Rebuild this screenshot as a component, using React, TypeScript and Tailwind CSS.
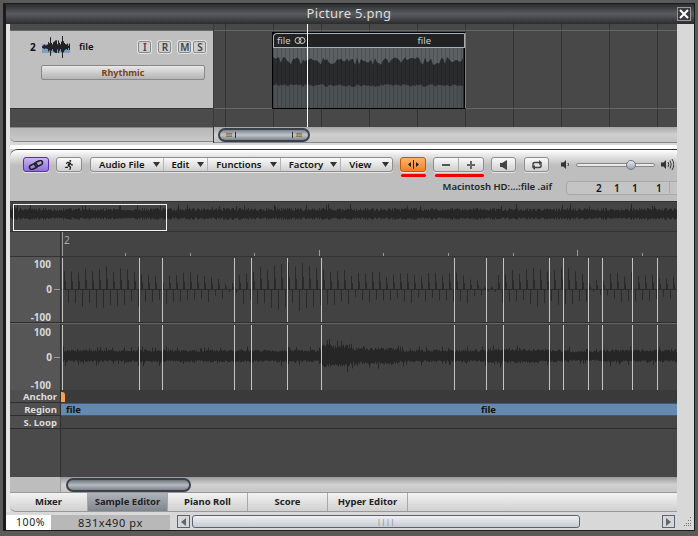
import React from "react";
import { FaRunning } from "react-icons/fa";

function rng(seed: number) {
  let s = seed;
  return () => {
    s = (s * 16807) % 2147483647;
    return (s - 1) / 2147483646;
  };
}

const W = 616; // wave width, x starts at 61
const transients = [62, 139, 162, 234, 251, 287, 321, 454, 486, 503, 549, 563, 588, 602, 632, 657];

function env(x: number, table: [number, number][]) {
  let v = table[0][1];
  for (const [k, a] of table) if (x >= k) v = a;
  return v;
}

const upEnv: [number, number][] = [[0, 21], [70, 19], [140, 15], [205, 11], [222, 5], [236, 16], [255, 22], [320, 17], [345, 14], [440, 15], [470, 10], [482, 3], [492, 16], [520, 19], [570, 15], [585, 5], [592, 8], [606, 14], [640, 12]];
const bandEnv: [number, number][] = [[0, 6], [140, 6], [240, 6], [321, 11], [350, 8], [400, 6], [454, 6], [488, 7], [540, 6], [570, 5], [600, 6], [620, 6]];

function Channel1() {
  const r = rng(77);
  const d: string[] = [];
  const z = 32;
  for (let x = 64; x < 677; x += 7) {
    const a = env(x, upEnv);
    const up = a * (0.85 + r() * 0.35);
    const dn = a * (0.6 + r() * 0.4);
    d.push(`M${x - 61}.5 ${z}V${z - up}`);
    d.push(`M${x - 61 + 1}.5 ${z}V${z - up * 0.45}`);
    d.push(`M${x - 61 + 4}.5 ${z}V${z + dn}`);
  }
  return (
    <svg width={W} height={66} className="block">
      <path d={d.join("")} stroke="#2a2a2a" strokeWidth={1} fill="none" />
      <path d={`M0 ${z}.5H${W}`} stroke="#2a2a2a" />
      <Trans h={66} />
    </svg>
  );
}

function Channel2() {
  const r = rng(991);
  const d: string[] = [];
  const z = 32;
  for (let x = 62; x < 677; x++) {
    const a = env(x, bandEnv);
    const up = a * (0.7 + r() * (r() > 0.8 ? 0.9 : 0.35));
    const dn = a * (0.7 + r() * (r() > 0.8 ? 1.0 : 0.35));
    d.push(`M${x - 61}.5 ${z - up}V${z + dn}`);
  }
  return (
    <svg width={W} height={67} className="block">
      <path d={d.join("")} stroke="#262626" strokeWidth={1} fill="none" />
      <Trans h={67} />
    </svg>
  );
}

function Trans({ h }: { h: number }) {
  return (
    <path
      d={transients.map((x) => `M${x - 61}.5 1V${h}`).join("")}
      stroke="#c4c4c4"
      strokeWidth={1}
      fill="none"
    />
  );
}

function Overview() {
  const r = rng(4242);
  const d: string[] = [];
  for (let x = 0; x < 667; x++) {
    const base = 3 + r() * 3;
    const spike = r() > 0.96 ? 4 : 0;
    d.push(`M${x}.5 ${12 - base - spike}V${13 + base * 0.8}`);
  }
  return (
    <svg width={667} height={30} className="block">
      <path d={d.join("")} stroke="#262626" fill="none" />
      <rect x={3.5} y={2.5} width={153} height={26} fill="none" stroke="#f2f2f2" />
    </svg>
  );
}

function RegionWave() {
  const r = rng(321);
  const top: string[] = ["M0 0"];
  const bot: string[] = ["M0 61"];
  const stripes: string[] = [];
  for (let x = 0; x <= 190; x += 2) {
    const t = 9 + r() * 8;
    top.push(`L${x} ${r() > 0.97 ? 30 : t}`);
    bot.push(`L${x} ${36 + r() * 3}`);
    if (x % 4 === 0) stripes.push(`M${x}.5 0V61`);
  }
  top.push("L190 0Z");
  bot.push("L190 61Z");
  return (
    <svg width={191} height={61} className="block">
      <rect width={191} height={61} fill="#2a2b2d" />
      <path d={top.join("")} fill="#5d6062" />
      <path d={bot.join("")} fill="#4b5053" />
      <path d={stripes.join("")} stroke="#000" strokeOpacity={0.14} fill="none" />
    </svg>
  );
}

function MiniWave() {
  const r = rng(55);
  const d: string[] = [];
  for (let x = 0; x < 28; x++) {
    const c = Math.abs(x - 14);
    const a = (r() * 5 + 2) * (c < 10 ? 1 : 0.5) + (x === 8 || x === 20 ? 6 : 0);
    d.push(`M${x}.5 ${11 - a}V${11 + a * 0.9}`);
  }
  return (
    <svg width={28} height={22} className="block">
      <rect y={8} width={28} height={9} fill="#7fa0c4" />
      <path d={d.join("")} stroke="#222" fill="none" />
    </svg>
  );
}

const btnShape =
  "flex items-center justify-center h-[15px] rounded-[3px] border shadow-[0_1px_0_#e4e4e4] bg-linear-to-b";
const btn = `${btnShape} border-[#8e8e8e] from-[#fafafa] to-[#cfcfcf]`;

function Menu({ label, w, last }: { label: string; w: string; last?: boolean }) {
  return (
    <div className={`${w} flex items-center justify-between pl-[8px] pr-[3px] h-full ${last ? "" : "border-r border-[#b5b5b5]"}`}>
      <span>{label}</span>
      <svg width={7} height={5}><path d="M0 0H7L3.5 5Z" fill="#333" /></svg>
    </div>
  );
}

function Ibtn({ c }: { c: string }) {
  return (
    <div className="w-[13px] h-[12px] flex items-center justify-center border border-[#8a8a8a] rounded-[2px] bg-[#cfcfcf] text-[10px] text-[#444] leading-none shadow-[0_0_0_1px_#e0e0e0]">
      {c}
    </div>
  );
}

function Labels({ pt }: { pt: string }) {
  return (
    <div className={`w-[51px] h-full ${pt} bg-[#565656] border-r border-[#333] flex flex-col justify-between text-[10px] font-bold text-[#d8d8d8] leading-none`}>
      <div className="text-right pr-[9px]">100</div>
      <div className="flex items-center justify-end gap-[2px] -mt-[3px]">
        <span>0</span>
        <span className="w-[6px] h-px bg-[#999]" />
      </div>
      <div className="text-right pr-[9px]">-100</div>
    </div>
  );
}

function RowLabel({ t, h }: { t: string; h: string }) {
  return (
    <div className={`w-[51px] ${h} pt-[1px] bg-[#4f4f4f] border-r border-b border-[#2e2e2e] text-[9.5px] font-bold text-[#dcdcdc] leading-none flex items-center justify-end pr-[3px] whitespace-nowrap`}>
      {t}
    </div>
  );
}

function Tab({ t, w, active }: { t: string; w: string; active?: boolean }) {
  return (
    <div
      className={`${w} h-full pb-[1px] flex items-center justify-center border-r border-[#a8a8a8] ${
        active ? "bg-linear-to-b from-[#b0b4ba] to-[#7f858d]" : ""
      }`}
    >
      {t}
    </div>
  );
}

export default function App() {
  return (
    <div className="w-[698px] h-[536px] bg-[#5a5a5a] overflow-hidden pl-[3px] pt-[3px] text-[#111] font-['Noto_Sans',sans-serif]">
      <div className="w-[692px] h-[528px] border border-l-[3px] border-[#1c1c1c] flex flex-col bg-[#d8d8d8]">
        {/* title */}
        <div className="h-[20px] shrink-0 relative flex items-center justify-center pr-[2px] pb-[1px] bg-linear-to-b from-[#2b2e31] via-[#5a5c5f] to-[#2a2c2e] text-[13px] tracking-[0.3px] text-[#dedede] leading-none">
          Picture 5.png
          <div className="absolute right-[3px] top-[3px] w-[14px] h-[14px] border border-[#999] bg-[#3c3c3c] flex items-center justify-center">
            <svg width={10} height={10}><path d="M1 1L9 9M9 1L1 9" stroke="#fff" strokeWidth={2} /></svg>
          </div>
        </div>

        <div className="flex flex-1 min-h-0">
          <div className="w-[4px] shrink-0 bg-[#e4e4e4]" />
          <div className="w-[667px] shrink-0 flex flex-col">
            {/* top pane */}
            <div className="h-[119px] shrink-0 flex relative">
              <div className="w-[203px] flex flex-col">
                <div className="h-[7px] bg-[#4b4b4b] border-b border-[#666]" />
                <div className="h-[78px] bg-[#bfbfbf] border-b border-[#333] relative pl-[20px] pt-[5px]">
                  <div className="flex items-center text-[9.5px] font-semibold h-[22px]">
                    <span className="w-[12px] text-[10px] font-bold">2</span>
                    <MiniWave />
                    <span className="ml-[9px]">file</span>
                    <div className="ml-[45px] flex gap-[7px]">
                      <Ibtn c="I" />
                      <Ibtn c="R" />
                      <div className="flex gap-[2px]">
                        <Ibtn c="M" />
                        <Ibtn c="S" />
                      </div>
                    </div>
                  </div>
                  <div className="mt-[7px] ml-[11px] w-[164px] h-[15px] pb-[1px] rounded-[2px] border border-[#888] bg-linear-to-b from-[#e8e8e8] to-[#b4b4b4] flex items-center justify-center text-[9px] font-bold text-[#7a4418] leading-none">
                    Rhythmic
                  </div>
                </div>
                <div className="h-[18px] bg-[#4b4b4b]" />
                <div className="h-[15px] bg-linear-to-b from-[#b8b8b8] to-[#c8c8c8] border-t border-[#888] border-b rounded-bl-[5px]" />
              </div>
              <div className="flex-1 flex flex-col border-l border-[#3a3a3a]">
                <div className="h-[103px] bg-[#484848] bg-[linear-gradient(to_right,#333_1px,transparent_1px)] bg-[length:48px_100%] bg-[position:11px_0]">
                  <div className="h-[7px] border-b border-[#666]" />
                  <div className="h-[78px] border-b border-[#666] pl-[58px] pt-[1px]">
                    <div className="w-[194px] h-[77px] border border-black border-r-[#3f8fdc] bg-black flex flex-col">
                      <div className="h-[15px] bg-[#222] border border-[#9fb3c4] rounded-tl-[4px] border-r-[#aaa] flex items-center justify-between text-[9.5px] text-[#ccc] leading-none pl-[3px] pr-[33px]">
                        <span className="flex items-center gap-[3px]">file
                          <svg width={12} height={7}><circle cx={4} cy={3.5} r={3} fill="none" stroke="#ccc" /><circle cx={8} cy={3.5} r={3} fill="none" stroke="#ccc" /></svg>
                        </span>
                        <span>file</span>
                      </div>
                      <RegionWave />
                    </div>
                  </div>
                </div>
                <div className="h-[16px] bg-linear-to-b from-[#a8a8a8] via-[#cfcfcf] to-[#c4c4c4] border-b border-[#888] pl-[4px] pt-[1px]">
                  <div className="w-[92px] h-[14px] rounded-full border-2 border-[#3a414a] bg-linear-to-b from-[#7d848c] via-[#c2c6cb] to-[#7d848c] flex items-center justify-between px-[6px] text-[6px] text-[#333] leading-none">
                    <span className="border-r border-[#333] pr-[3px]">III</span>
                    <span className="border-l border-[#333] pl-[3px]">III</span>
                  </div>
                </div>
              </div>
              <div className="absolute left-[297px] top-0 w-px h-[103px] bg-white" />
            </div>

            {/* separator */}
            <div className="h-[6px] shrink-0 bg-white border-t-2 border-[#d8d8d8]" />

            {/* editor */}
            <div className="flex-1 flex flex-col min-h-0 rounded-tl-[8px] overflow-hidden border-t border-[#333]">
              <div className="h-[51px] shrink-0 bg-linear-to-b from-white to-[#bebebe] to-30% relative text-[9.5px] font-semibold leading-none">
                <div className="flex items-center h-[15px] mt-[7px] ml-[13px]">
                  <div className={`${btnShape} w-[26px] border-[#5a2fb0] from-[#c9b6f2] to-[#8f6fdc]`}>
                    <svg width={16} height={10} viewBox="0 0 16 10">
                      <g transform="rotate(-25 8 5)" fill="none" stroke="#222" strokeWidth={1.6}>
                        <rect x={1} y={3} width={8} height={4.5} rx={2.2} />
                        <rect x={7} y={2.5} width={8} height={4.5} rx={2.2} />
                      </g>
                    </svg>
                  </div>
                  <div className={`${btn} w-[26px] ml-[7px]`}>
                    <FaRunning size={10} color="#222" />
                  </div>
                  <div className={`${btn} ml-[8px] w-[303px]`}>
                    <Menu label="Audio File" w="w-[73px]" />
                    <Menu label="Edit" w="w-[45px]" />
                    <Menu label="Functions" w="w-[73px]" />
                    <Menu label="Factory" w="w-[61px]" />
                    <Menu label="View" w="w-[51px]" last />
                  </div>
                  <div className={`${btnShape} w-[26px] ml-[7px] border-[#b85c10] from-[#ffb266] to-[#f08020]`}>
                    <svg width={13} height={9}><path d="M6.5 0V9" stroke="#222" /><path d="M4 2L1 4.5L4 7ZM9 2L12 4.5L9 7Z" fill="#222" /></svg>
                  </div>
                  <div className={`${btn} w-[51px] ml-[7px]`}>
                    <div className="flex-1 h-full flex items-center justify-center border-r border-[#aaa]">
                      <div className="w-[8px] h-[2px] bg-[#555]" />
                    </div>
                    <div className="flex-1 h-full flex items-center justify-center">
                      <svg width={8} height={8}><path d="M4 0V8M0 4H8" stroke="#666" strokeWidth={2} /></svg>
                    </div>
                  </div>
                  <div className={`${btn} w-[25px] ml-[7px]`}>
                    <svg width={8} height={10}><path d="M7 0V10L2 7H0V3H2Z" fill="#444" /></svg>
                  </div>
                  <div className={`${btn} w-[25px] ml-[8px]`}>
                    <svg width={14} height={10} fill="none" stroke="#444" strokeWidth={1.5}>
                      <path d="M3 7V4Q3 2.5 5 2.5H10" /><path d="M11 3V6Q11 7.5 9 7.5H4" />
                      <path d="M9 0L12 2.5L9 5Z" fill="#444" stroke="none" /><path d="M5 5L2 7.5L5 10Z" fill="#444" stroke="none" />
                    </svg>
                  </div>
                  <svg width={9} height={11} className="ml-[12px]"><path d="M5 1V10L2.5 7.5H0V3.5H2.5Z" fill="#333" /><path d="M7 4Q8 5.5 7 7" stroke="#333" fill="none" /></svg>
                  <div className="relative ml-[6px] w-[79px] h-[4px] rounded-full border border-[#888] bg-[#e8e8e8]">
                    <div className="absolute left-[49px] -top-[4px] w-[10px] h-[10px] rounded-full border border-[#777] bg-linear-to-b from-[#e6e9ef] to-[#98a4b8]" />
                  </div>
                  <svg width={13} height={13} className="ml-[6px]"><path d="M5 2V11L2.5 8.5H0V4.5H2.5Z" fill="#333" /><path d="M7 4Q8.5 6.5 7 9M9 2.5Q11.5 6.5 9 10.5M11 1Q14.5 6.5 11 12" stroke="#333" fill="none" /></svg>
                </div>
                <div className="absolute top-[24px] left-[391px] w-[25px] h-[3px] rounded-full bg-[#f00000]" />
                <div className="absolute top-[24px] left-[425px] w-[49px] h-[3px] rounded-full bg-[#f00000]" />
                <div className="flex items-center justify-end h-[14px] mt-[9px]">
                  <span className="mr-[14px] pb-[2px] text-[#222]">Macintosh HD:...:file .aif</span>
                  <div className="w-[111px] h-[14px] pb-[1px] rounded-l-[4px] border border-r-0 border-[#a8a8a8] bg-[#c4c4c4] flex items-center text-[10px] text-[#111] relative">
                    <span className="ml-[29px] w-[18px]">2</span>
                    <span className="w-[18px]">1</span>
                    <span className="w-[24px]">1</span>
                    <span className="w-[13px]">1</span>
                    <span className="h-full border-l border-[#a8a8a8]" />
                  </div>
                </div>
              </div>
              <div className="h-[30px] shrink-0 bg-[#444] border-t border-[#333]">
                <Overview />
              </div>
              <div className="h-[25px] shrink-0 flex border-t border-[#333]">
                <div className="w-[51px] bg-[#515151] border-r border-[#333]" />
                <div className="flex-1 relative bg-[#444]">
                  <span className="absolute left-[3px] top-[3px] text-[10px] leading-none text-[#aaa]">2</span>
                  <svg width={616} height={24} className="block">
                    <path d="M1.5 0V24M64.5 21V24M129.5 21V24M193.5 21V24M258.5 18V24M322.5 21V24M387.5 21V24M452.5 21V24M516.5 18V24M581.5 21V24" stroke="#999" fill="none" />
                  </svg>
                </div>
              </div>
              <div className="h-[134px] shrink-0 flex flex-col border-t border-[#333]">
                <div className="flex h-[66px] border-b border-[#2c2c2c]">
                  <Labels pt="pt-[2px]" />
                  <div className="flex-1 bg-[#424242] overflow-hidden"><Channel1 /></div>
                </div>
                <div className="flex h-[67px] border-t border-[#666]">
                  <Labels pt="pt-[3px]" />
                  <div className="flex-1 bg-[#424242] overflow-hidden"><Channel2 /></div>
                </div>
              </div>
              <div className="flex h-[13px] shrink-0">
                <RowLabel t="Anchor" h="h-[13px]" />
                <div className="flex-1 bg-[#3a3a3a] pt-[2px]">
                  <div className="w-[4px] h-[10px] bg-[#ff9f40] rounded-tr-[3px]" />
                </div>
              </div>
              <div className="flex h-[13px] shrink-0">
                <RowLabel t="Region" h="h-[13px]" />
                <div className="flex-1 bg-[#6689ae] border-y border-[#3d5878] flex items-center relative text-[9.5px] font-bold text-[#111] leading-none pl-[5px]">
                  file
                  <span className="absolute left-[420px]">file</span>
                </div>
              </div>
              <div className="flex h-[13px] shrink-0">
                <RowLabel t="S. Loop" h="h-[13px]" />
                <div className="flex-1 bg-[#464646] border-b border-[#2e2e2e]" />
              </div>
              <div className="flex h-[48px] shrink-0">
                <div className="w-[51px] bg-[#4a4a4a] border-r border-[#2e2e2e]" />
                <div className="flex-1 bg-[#474747]" />
              </div>
              <div className="flex h-[15px] shrink-0">
                <div className="w-[51px] bg-[#bdbdbd] border-r border-[#999]" />
                <div className="flex-1 bg-linear-to-b from-[#9a9a9a] via-[#d0d0d0] to-[#c6c6c6] pl-[5px]">
                  <div className="w-[125px] h-[14px] mt-[0.5px] rounded-full border-2 border-[#3a414a] bg-linear-to-b from-[#6f767e] via-[#b8bcc1] to-[#7d848c]" />
                </div>
              </div>
              <div className="flex h-[20px] shrink-0 items-center bg-linear-to-b from-[#f2f2f2] to-[#d0d0d0] border-t border-[#999] border-b text-[9.5px] font-bold text-[#222] leading-none rounded-bl-[6px]">
                <Tab t="Mixer" w="w-[78px]" />
                <Tab t="Sample Editor" w="w-[80px]" active />
                <Tab t="Piano Roll" w="w-[80px]" />
                <Tab t="Score" w="w-[80px]" />
                <Tab t="Hyper Editor" w="w-[80px]" />
              </div>
            </div>
          </div>
          <div className="w-[16px] shrink-0 bg-[#d8d8d8]" />
        </div>

        {/* status */}
        <div className="h-[18px] shrink-0 flex items-start bg-[#d8d8d8] pt-[3px] text-[11px] tracking-[0.6px] leading-none text-[#222]">
          <div className="w-[45px] h-[15px] pb-[1px] bg-white flex items-center pl-[10px] text-[10.5px]">100%</div>
          <div className="w-[119px] h-[15px] pb-[1px] bg-[#b8b8b8] flex items-center justify-center">831x490 px</div>
          <div className="ml-[7px] w-[13px] h-[13px] border border-[#5a6470] bg-[#d4d8dc] flex items-center justify-center">
            <svg width={5} height={8}><path d="M5 0V8L0 4Z" fill="#666" /></svg>
          </div>
          <div className="ml-[2px] w-[388px] h-[13px] rounded-[3px] border border-[#5a6470] bg-linear-to-b from-[#eef0f3] to-[#c8ccd2] flex items-center justify-center text-[7px] text-[#777]">
            ||||
          </div>
          <div className="ml-[82px] w-[13px] h-[13px] border border-[#5a6470] bg-[#d4d8dc] flex items-center justify-center">
            <svg width={5} height={8}><path d="M0 0V8L5 4Z" fill="#666" /></svg>
          </div>
          <svg width={12} height={12} className="ml-[5px]">
            <path d="M10 2h1v1h-1zM8 5h1v1H8zM10 5h1v1h-1zM6 8h1v1H6zM8 8h1v1H8zM10 8h1v1h-1zM4 10h1v1H4zM6 10h1v1H6zM8 10h1v1H8zM10 10h1v1h-1z" fill="#777" />
          </svg>
        </div>
      </div>
    </div>
  );
}
